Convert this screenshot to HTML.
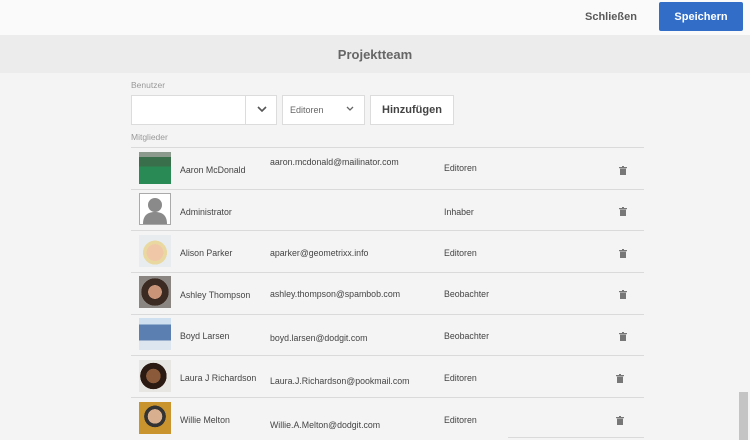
<!DOCTYPE html>
<html><head><meta charset="utf-8"><style>
*{margin:0;padding:0;box-sizing:border-box}
body{width:750px;height:440px;overflow:hidden;background:#f4f4f4;font-family:"Liberation Sans",sans-serif;position:relative;color:#4b4b4b}
.a{position:absolute;white-space:nowrap}
.top{left:0;top:0;width:750px;height:35px;background:#fafafa}
.hdr{left:0;top:35px;width:750px;height:38px;background:#ececec}
.sep{position:absolute;left:131px;width:513px;height:1px;background:#dadada}
.av{position:absolute;left:139px;width:32px;height:32px;overflow:hidden}
.t{font-size:8.8px;color:#444}
.trash{position:absolute;width:8px;height:9px}
</style></head><body>
<div class="a top"></div>
<div class="a" style="left:585px;top:11px;font-size:11px;font-weight:bold;color:#5a5a5a">Schließen</div>
<div class="a" style="left:659px;top:2px;width:84px;height:29px;background:#326ec8;border-radius:2px;color:#fff;font-size:11px;font-weight:bold;text-align:center;line-height:31px">Speichern</div>
<div class="a hdr"></div>
<div class="a" style="left:0;width:750px;top:47px;text-align:center;font-size:13px;font-weight:bold;color:#666">Projektteam</div>
<div class="a" style="left:131px;top:80px;font-size:8.5px;color:#999">Benutzer</div>
<div class="a" style="left:131px;top:95px;width:146px;height:30px;background:#fff;border:1px solid #dcdcdc"></div>
<div class="a" style="left:245px;top:95px;width:32px;height:30px;border-left:1px solid #dcdcdc;font-size:10px;text-align:center;line-height:30px;color:#555">
<svg width="10" height="6" viewBox="0 0 10 6" style="vertical-align:middle"><path d="M1 1L5 5L9 1" stroke="#555" stroke-width="1.6" fill="none"/></svg></div>
<div class="a" style="left:282px;top:95px;width:83px;height:30px;background:#fff;border:1px solid #dcdcdc"></div>
<div class="a" style="left:290px;top:105px;font-size:9px;color:#666">Editoren</div>
<svg class="a" style="left:346px;top:106px" width="8" height="5" viewBox="0 0 8 5"><path d="M1 1L4 4L7 1" stroke="#666" stroke-width="1.3" fill="none"/></svg>
<div class="a" style="left:370px;top:95px;width:84px;height:30px;background:#fff;border:1px solid #dcdcdc;font-size:11px;font-weight:bold;text-align:center;line-height:28px;color:#444">Hinzufügen</div>
<div class="a" style="left:131px;top:132px;font-size:8.5px;color:#999">Mitglieder</div>

<div class="sep" style="top:147px"></div>
<div class="sep" style="top:189px"></div>
<div class="sep" style="top:230px"></div>
<div class="sep" style="top:272px"></div>
<div class="sep" style="top:314px"></div>
<div class="sep" style="top:355px"></div>
<div class="sep" style="top:397px"></div>
<div class="a" style="left:508px;top:437px;width:136px;height:1px;background:#dadada"></div>

<div class="av" style="top:152px;background:linear-gradient(180deg,#8c9a8e 0 15%,#3a6f4c 15% 45%,#2a8a55 45%)"></div>
<div class="av" style="top:193px;background:#fff;border:1px solid #aaa"><svg width="30" height="30" viewBox="0 0 30 30"><circle cx="15" cy="11" r="7" fill="#8a8a8a"/><path d="M3 30C3 21 8 18 15 18C22 18 27 21 27 30Z" fill="#8a8a8a"/></svg></div>
<div class="av" style="top:235px;background:radial-gradient(circle at 50% 55%,#f0c8a8 0 35%,#e9d9a0 36% 50%,#e8ecef 51%)"></div>
<div class="av" style="top:276px;background:radial-gradient(circle at 50% 50%,#c99478 0 30%,#3b2a22 31% 60%,#8a8580 61%)"></div>
<div class="av" style="top:318px;background:linear-gradient(180deg,#cfe0f0 0 20%,#5a7fb0 20% 70%,#dde6ee 70%)"></div>
<div class="av" style="top:360px;background:radial-gradient(circle at 45% 50%,#8a5a3a 0 30%,#2a1a12 31% 55%,#e8e6e2 56%)"></div>
<div class="av" style="top:402px;background:radial-gradient(circle at 50% 45%,#d8b090 0 30%,#333 31% 45%,#c9942e 46%)"></div>

<div class="a t" style="left:180px;top:165px">Aaron McDonald</div>
<div class="a t" style="left:270px;top:157px">aaron.mcdonald@mailinator.com</div>
<div class="a t" style="left:444px;top:163px">Editoren</div>
<div class="a t" style="left:180px;top:207px">Administrator</div>
<div class="a t" style="left:444px;top:207px">Inhaber</div>
<div class="a t" style="left:180px;top:248px">Alison Parker</div>
<div class="a t" style="left:270px;top:248px">aparker@geometrixx.info</div>
<div class="a t" style="left:444px;top:248px">Editoren</div>
<div class="a t" style="left:180px;top:290px">Ashley Thompson</div>
<div class="a t" style="left:270px;top:289px">ashley.thompson@spambob.com</div>
<div class="a t" style="left:444px;top:289px">Beobachter</div>
<div class="a t" style="left:180px;top:331px">Boyd Larsen</div>
<div class="a t" style="left:270px;top:333px">boyd.larsen@dodgit.com</div>
<div class="a t" style="left:444px;top:331px">Beobachter</div>
<div class="a t" style="left:180px;top:373px">Laura J Richardson</div>
<div class="a t" style="left:270px;top:376px">Laura.J.Richardson@pookmail.com</div>
<div class="a t" style="left:444px;top:373px">Editoren</div>
<div class="a t" style="left:180px;top:415px">Willie Melton</div>
<div class="a t" style="left:270px;top:420px">Willie.A.Melton@dodgit.com</div>
<div class="a t" style="left:444px;top:415px">Editoren</div>

<svg class="trash" style="left:619px;top:166px" viewBox="0 0 8 9"><rect x="0" y="1" width="8" height="1.2" fill="#777"/><rect x="3" y="0" width="2" height="1" fill="#777"/><rect x="1" y="2.6" width="6" height="6.4" fill="#777"/></svg>
<svg class="trash" style="left:619px;top:207px" viewBox="0 0 8 9"><rect x="0" y="1" width="8" height="1.2" fill="#777"/><rect x="3" y="0" width="2" height="1" fill="#777"/><rect x="1" y="2.6" width="6" height="6.4" fill="#777"/></svg>
<svg class="trash" style="left:619px;top:249px" viewBox="0 0 8 9"><rect x="0" y="1" width="8" height="1.2" fill="#777"/><rect x="3" y="0" width="2" height="1" fill="#777"/><rect x="1" y="2.6" width="6" height="6.4" fill="#777"/></svg>
<svg class="trash" style="left:619px;top:290px" viewBox="0 0 8 9"><rect x="0" y="1" width="8" height="1.2" fill="#777"/><rect x="3" y="0" width="2" height="1" fill="#777"/><rect x="1" y="2.6" width="6" height="6.4" fill="#777"/></svg>
<svg class="trash" style="left:619px;top:332px" viewBox="0 0 8 9"><rect x="0" y="1" width="8" height="1.2" fill="#777"/><rect x="3" y="0" width="2" height="1" fill="#777"/><rect x="1" y="2.6" width="6" height="6.4" fill="#777"/></svg>
<svg class="trash" style="left:616px;top:374px" viewBox="0 0 8 9"><rect x="0" y="1" width="8" height="1.2" fill="#777"/><rect x="3" y="0" width="2" height="1" fill="#777"/><rect x="1" y="2.6" width="6" height="6.4" fill="#777"/></svg>
<svg class="trash" style="left:616px;top:416px" viewBox="0 0 8 9"><rect x="0" y="1" width="8" height="1.2" fill="#777"/><rect x="3" y="0" width="2" height="1" fill="#777"/><rect x="1" y="2.6" width="6" height="6.4" fill="#777"/></svg>

<div class="a" style="left:739px;top:392px;width:9px;height:48px;background:#c4c4c4"></div>
</body></html>
